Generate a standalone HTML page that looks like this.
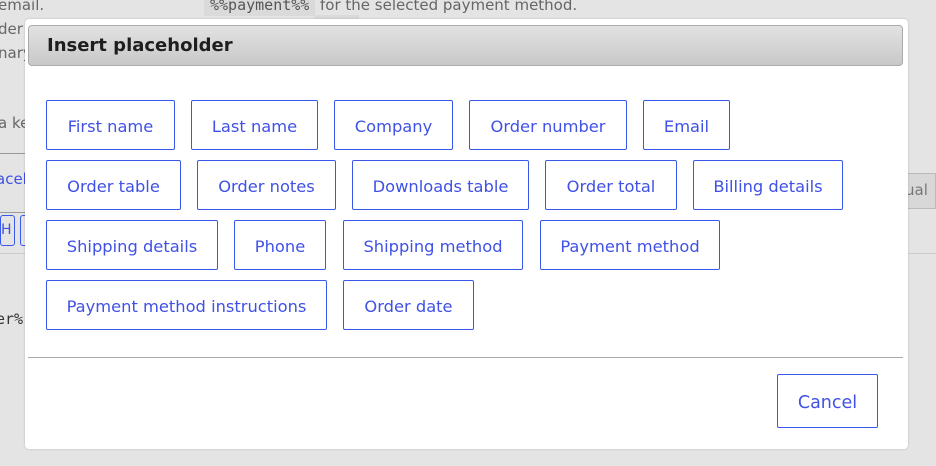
<!DOCTYPE html>
<html><head><meta charset="utf-8"><style>
*{box-sizing:border-box;margin:0;padding:0}
body{width:936px;height:466px;overflow:hidden;background:#e4e4e4;font-family:"DejaVu Sans","Liberation Sans",sans-serif;position:relative;color:#555}
.bg{position:absolute;font-size:15px;color:#666;white-space:nowrap}
.code{position:absolute;background:#dadada;font-family:"DejaVu Sans Mono","Liberation Mono",monospace;font-size:15px;color:#555;padding:0 6px}
.dlg{position:absolute;left:25px;top:19px;width:883px;height:430px;background:#fff;border-radius:4px;box-shadow:0 0 2px rgba(0,0,0,.2)}
.hd{position:absolute;left:3px;top:6px;width:875px;height:41px;border:1px solid #aaa;border-radius:4px;background:linear-gradient(#e2e2e2,#c8c8c8);font-weight:bold;font-size:18px;color:#1e1e1e;padding:9px 0 0 18px}
.b{position:absolute;height:50px;border:1px solid #3858e9;border-radius:2px;color:#3f51e6;font-size:16.3px;display:flex;align-items:center;justify-content:center;white-space:nowrap;background:#fff;padding-top:3px}
.sep{position:absolute;left:3px;top:338px;width:875px;height:1px;background:#aaa}
</style></head><body>
<div class="bg" style="left:-2px;top:-4px">email.</div>
<div class="code" style="left:204px;top:-4px;height:20px">%%payment%%</div>
<div class="bg" style="left:320px;top:-4px">for the selected payment method.</div>
<div style="position:absolute;left:314px;top:15px;width:45px;height:4px;background:#dadada"></div>
<div class="bg" style="left:-2px;top:20px">der</div>
<div class="bg" style="left:-2px;top:44px">nary</div>
<div class="bg" style="left:-2px;top:114px">a ke</div>
<div style="position:absolute;left:0;top:153px;width:25px;height:1px;background:#999"></div>
<div class="bg" style="left:-4px;top:170px;color:#3f51e6">aceh</div>
<div style="position:absolute;left:0;top:212px;width:25px;height:1px;background:#999"></div>
<div style="position:absolute;left:0;top:215px;width:15px;height:31px;border:1px solid #3858e9;border-radius:3px;color:#3f51e6;font-size:14px;padding:6px 0 0 0">H</div>
<div style="position:absolute;left:20px;top:215px;width:10px;height:31px;border:1px solid #3858e9;border-radius:3px"></div>
<div style="position:absolute;left:0;top:253px;width:936px;height:1px;background:#ccc"></div>
<div class="bg" style="left:-4px;top:310px;font-family:'DejaVu Sans Mono',monospace;color:#333">er%</div>
<div style="position:absolute;left:905px;top:173px;width:31px;height:36px;background:#d8d8d8;border:1px solid #bbb"></div>
<div class="bg" style="left:905px;top:181px;color:#777">ual</div>

<div class="dlg">
<div class="hd">Insert placeholder</div>
<div class="b" style="left:21px;top:81px;width:129px">First name</div>
<div class="b" style="left:166px;top:81px;width:127px">Last name</div>
<div class="b" style="left:309px;top:81px;width:119px">Company</div>
<div class="b" style="left:444px;top:81px;width:158px">Order number</div>
<div class="b" style="left:618px;top:81px;width:87px">Email</div>
<div class="b" style="left:21px;top:141px;width:135px">Order table</div>
<div class="b" style="left:172px;top:141px;width:139px">Order notes</div>
<div class="b" style="left:327px;top:141px;width:177px">Downloads table</div>
<div class="b" style="left:520px;top:141px;width:132px">Order total</div>
<div class="b" style="left:668px;top:141px;width:150px">Billing details</div>
<div class="b" style="left:21px;top:201px;width:172px">Shipping details</div>
<div class="b" style="left:209px;top:201px;width:92px">Phone</div>
<div class="b" style="left:318px;top:201px;width:180px">Shipping method</div>
<div class="b" style="left:515px;top:201px;width:180px">Payment method</div>
<div class="b" style="left:21px;top:261px;width:281px">Payment method instructions</div>
<div class="b" style="left:318px;top:261px;width:131px">Order date</div>
<div class="sep"></div>
<div class="b" style="left:752px;top:355px;width:101px;height:54px;font-size:17.5px">Cancel</div>
</div>
</body></html>
